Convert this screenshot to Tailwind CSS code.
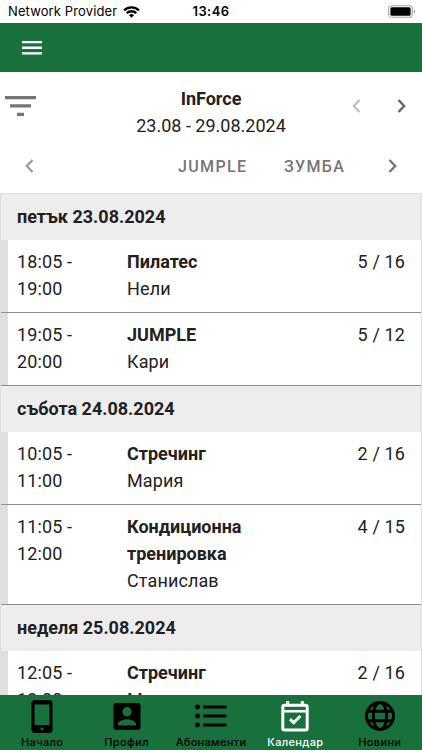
<!DOCTYPE html>
<html lang="bg">
<head>
<meta charset="utf-8">
<title>InForce</title>
<script src="https://cdn.jsdelivr.net/npm/@tailwindcss/browser@4"></script>
</head>
<body class="bg-white">
<div class="w-[422px] h-[750px] overflow-hidden flex flex-col bg-white text-[#212121] font-[Roboto,sans-serif] text-[18px] leading-[27px] tracking-[0.12px]">
  <div class="h-[23px] shrink-0 grid grid-cols-3 items-center font-[Inter,sans-serif] text-black text-[13px] leading-[23px] tracking-[0.12px]">
    <div class="flex items-center pl-2 gap-[5px] whitespace-nowrap">
      <span class="w-[110px]">Network Provider</span>
      <svg class="w-[17px] h-[12px] shrink-0" viewBox="0 0 17 12" fill="none" stroke="#000" stroke-width="2.3"><path d="M1 4.4a10.8 10.8 0 0 1 15 0M3.7 7.2a6.9 6.9 0 0 1 9.600 0"/><path d="M8.5 11.800 6 9.300a3.600 3.600 0 0 1 5 0z" fill="#000" stroke="none"/></svg>
    </div>
    <div class="text-center font-semibold tracking-[0.4px]">13:46</div>
    <div class="flex justify-end pr-[6px]">
      <svg class="w-[28px] h-[13px]" viewBox="0 0 28 13"><rect x=".7" y=".7" width="23.6" height="11.600" rx="3.400" fill="none" stroke="#a3a3a3" stroke-width="1.1"/><rect x="2.400" y="2.300" width="20.200" height="8.400" rx="1.500"/><path d="M25.800 4.400c1.800.6 1.800 3.600 0 4.200z" fill="#a3a3a3"/></svg>
    </div>
  </div>
  <header class="h-[49px] shrink-0 bg-[#18703c] flex items-center pl-[22px]">
    <svg class="w-[20px] h-[14px]" viewBox="0 0 20 14" fill="#fff"><path d="M0 0h20v2.300H0zM0 5.600h20v2.300H0zM0 11.200h20v2.300H0z"/></svg>
  </header>
  <section class="h-[67px] shrink-0 flex pt-[13px]">
    <div class="w-[99px] pt-[11px] pl-[5px]">
      <svg class="w-[31px] h-[20px]" viewBox="0 0 31 20" fill="#757575"><path d="M0 0h31v3.300H0zM5 8.300h21v3.300H5zM12 16.700h7V20h-7z"/></svg>
    </div>
    <div class="w-[224px] text-center tracking-normal">
      <div class="font-bold">InForce</div>
      <div>23.08 - 29.08.2024</div>
    </div>
    <div class="flex-1 flex pl-[29px] pt-[14px] gap-[36px]">
      <svg class="w-[9px] h-[14px]" viewBox="0 0 9 14" fill="none" stroke="#bdbdbd" stroke-width="2.2"><path d="M7.500 1 1.800 7l5.700 6"/></svg>
      <svg class="w-[9px] h-[14px]" viewBox="0 0 9 14" fill="none" stroke="#666" stroke-width="2.4"><path d="M1.500 1 7.200 7l-5.700 6"/></svg>
    </div>
  </section>
  <nav class="h-[54px] shrink-0 flex items-center text-[#757575] text-[16px] font-medium tracking-[1.35px] pl-[25px]">
    <svg class="w-[9px] h-[14px]" viewBox="0 0 9 14" fill="none" stroke="#999" stroke-width="2.2"><path d="M7.500 1 1.800 7l5.700 6"/></svg>
    <span class="ml-[144px] w-[106px]">JUMPLE</span>
    <span class="w-[104px]">ЗУМБА</span>
    <svg class="w-[9px] h-[14px]" viewBox="0 0 9 14" fill="none" stroke="#757575" stroke-width="2.4"><path d="M1.500 1 7.200 7l-5.700 6"/></svg>
  </nav>
  <main class="flex-1 min-h-0 overflow-hidden border-t border-x border-[#dedede]">
    <h2 class="h-[46px] bg-[#ededed] pl-4 pt-[9px] font-bold tracking-normal">петък 23.08.2024</h2>
    <div class="flex h-[73px] border-b border-[#8e8e8e]">
      <div class="w-[7px] bg-[#dfdfdf]"></div>
      <div class="w-[110px] pl-[9px] pt-[8px]">18:05 -<br>19:00</div>
      <div class="w-[180px] pl-[9px] pt-[8px]"><b class="tracking-normal">Пилатес</b><br>Нели</div>
      <div class="flex-1 pr-4 pt-[8px] text-right">5 / 16</div>
    </div>
    <div class="flex h-[73px] border-b border-[#8e8e8e]">
      <div class="w-[7px] bg-[#dfdfdf]"></div>
      <div class="w-[110px] pl-[9px] pt-[8px]">19:05 -<br>20:00</div>
      <div class="w-[180px] pl-[9px] pt-[8px]"><b class="tracking-normal">JUMPLE</b><br>Кари</div>
      <div class="flex-1 pr-4 pt-[8px] text-right">5 / 12</div>
    </div>
    <h2 class="h-[46px] bg-[#ededed] pl-4 pt-[9px] font-bold tracking-normal">събота 24.08.2024</h2>
    <div class="flex h-[73px] border-b border-[#8e8e8e]">
      <div class="w-[7px] bg-[#dfdfdf]"></div>
      <div class="w-[110px] pl-[9px] pt-[8px]">10:05 -<br>11:00</div>
      <div class="w-[180px] pl-[9px] pt-[8px]"><b class="tracking-normal">Стречинг</b><br>Мария</div>
      <div class="flex-1 pr-4 pt-[8px] text-right">2 / 16</div>
    </div>
    <div class="flex h-[100px] border-b border-[#8e8e8e]">
      <div class="w-[7px] bg-[#dfdfdf]"></div>
      <div class="w-[110px] pl-[9px] pt-[8px]">11:05 -<br>12:00</div>
      <div class="w-[180px] pl-[9px] pt-[8px]"><b class="tracking-normal">Кондиционна<br>тренировка</b><br>Станислав</div>
      <div class="flex-1 pr-4 pt-[8px] text-right">4 / 15</div>
    </div>
    <h2 class="h-[46px] bg-[#ededed] pl-4 pt-[9px] font-bold tracking-normal">неделя 25.08.2024</h2>
    <div class="flex h-[73px]">
      <div class="w-[7px] bg-[#dfdfdf]"></div>
      <div class="w-[110px] pl-[9px] pt-[8px]">12:05 -<br>13:00</div>
      <div class="w-[180px] pl-[9px] pt-[8px]"><b class="tracking-normal">Стречинг</b><br>Мария</div>
      <div class="flex-1 pr-4 pt-[8px] text-right">2 / 16</div>
    </div>
  </main>
  <footer class="h-[55px] shrink-0 bg-[#18703c] grid grid-cols-5 text-center font-[Inter,sans-serif] font-medium text-[11px] leading-[14px] tracking-[0.35px] text-black">
    <div class="flex flex-col items-center pt-[4px]">
      <svg class="w-[34px] h-[36px]" viewBox="0 0 34 36"><path fill-rule="evenodd" d="M10 1h14a3.500 3.500 0 0 1 3.500 3.500v26A3.500 3.500 0 0 1 24 34H10a3.500 3.500 0 0 1-3.500-3.500v-26A3.500 3.500 0 0 1 10 1zM9.500 5.500v20.500h15V5.500zM17 28.200a1.500 1.500 0 1 0 0 3 1.500 1.500 0 0 0 0-3z"/></svg>
      <span>Начало</span>
    </div>
    <div class="flex flex-col items-center pt-[4px]">
      <svg class="w-[34px] h-[36px]" viewBox="0 0 34 36"><path fill-rule="evenodd" d="M6.500 4h21a3 3 0 0 1 3 3v21a3 3 0 0 1-3 3h-21a3 3 0 0 1-3-3V7a3 3 0 0 1 3-3zM17 8a4.700 4.700 0 1 0 0 9.400A4.700 4.700 0 0 0 17 8zM8 26.500h18v-1.500c0-3-6-4.800-9-4.800s-9 1.800-9 4.800z"/></svg>
      <span>Профил</span>
    </div>
    <div class="flex flex-col items-center pt-[4px]">
      <svg class="w-[34px] h-[36px]" viewBox="0 0 34 36"><circle cx="3.500" cy="8" r="2.400"/><circle cx="3.500" cy="17" r="2.400"/><circle cx="3.500" cy="26" r="2.400"/><path d="M9 6.500h23.500v3H9zM9 15.500h23.500v3H9zM9 24.500h23.500v3H9z"/></svg>
      <span class="whitespace-nowrap tracking-[0.3px]">Абонаменти</span>
    </div>
    <div class="flex flex-col items-center pt-[4px] text-white">
      <svg class="w-[34px] h-[36px]" viewBox="0 0 34 36" fill="none" stroke="#fff" stroke-width="3"><rect x="4.800" y="6.300" width="24.400" height="24.700" rx="1.800"/><path stroke-width="2.500" d="M4.500 12.300h25"/><path stroke-width="3" d="M9.700 2v5M24.300 2v5"/><path d="M12 20.200l3.700 3.500 6.700-6.700"/></svg>
      <span>Календар</span>
    </div>
    <div class="flex flex-col items-center pt-[4px]">
      <svg class="w-[34px] h-[36px]" viewBox="0 0 34 36" fill="none" stroke="#000" stroke-width="3"><circle cx="17" cy="17" r="13.500"/><ellipse cx="17" cy="17" rx="6.700" ry="13.500"/><path d="M4.500 12.200h25M4.500 21.800h25"/></svg>
      <span>Новини</span>
    </div>
  </footer>
</div>
</body>
</html>
